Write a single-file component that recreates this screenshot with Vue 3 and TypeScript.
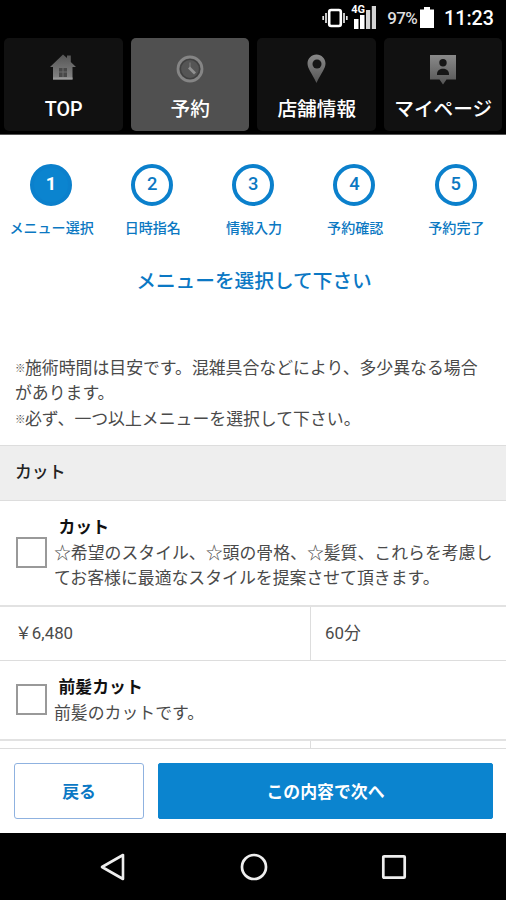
<script setup lang="ts">
interface Tab {
  id: 'home' | 'clock' | 'pin' | 'user'
  label: string
  active: boolean
}
interface MenuItem {
  name: string
  description: string[]
  price: string
  time: string
}

const tabs: Tab[] = [
  { id: 'home', label: 'TOP', active: false },
  { id: 'clock', label: '予約', active: true },
  { id: 'pin', label: '店舗情報', active: false },
  { id: 'user', label: 'マイページ', active: false },
]

const steps: string[] = ['メニュー選択', '日時指名', '情報入力', '予約確認', '予約完了']

const items: MenuItem[] = [
  {
    name: 'カット',
    description: [
      '☆希望のスタイル、☆頭の骨格、☆髪質、これらを考慮し',
      'てお客様に最適なスタイルを提案させて頂きます。',
    ],
    price: '￥6,480',
    time: '60分',
  },
  { name: '前髪カット', description: ['前髪のカットです。'], price: '', time: '' },
]
</script>

<template>
  <div class="screen">
    <header class="status">
      <svg class="vibrate" width="26" height="20" viewBox="0 0 26 20">
        <rect x="7.2" y="2" width="11.6" height="16" rx="2" fill="none" stroke="#fff" stroke-width="2.6" />
        <path d="M4 5v10M1.2 8v4M22 5v10M24.8 8v4" stroke="#e8e8e8" stroke-width="1.7" />
      </svg>
      <div class="signal">
        <span class="net">4G</span>
        <svg width="24" height="24" viewBox="0 0 24 24">
          <path d="M1 14h4.5v10H1z M7 10h4.5v14H7z" fill="#fff" />
          <path d="M13 5h4.2v19H13z M18.8 1H23v23h-4.2z" fill="#d4d4d4" />
        </svg>
      </div>
      <span class="percent">97%</span>
      <svg class="battery" width="14" height="21" viewBox="0 0 14 21">
        <path d="M4 0h6v2.5h4V21H0V2.5h4z" fill="#fff" />
      </svg>
      <span class="clock">11:23</span>
    </header>

    <nav class="tabs">
      <a v-for="tab in tabs" :key="tab.id" class="tab" :class="{ active: tab.active }">
        <svg class="tab-icon" width="30" height="32" viewBox="0 0 30 32">
          <defs>
            <linearGradient id="metal" x1="0" y1="0" x2="0" y2="1">
              <stop offset="0" stop-color="#555" />
              <stop offset="1" stop-color="#858585" />
            </linearGradient>
            <linearGradient id="metal-dark" x1="0" y1="0" x2="0" y2="1">
              <stop offset="0" stop-color="#8a8a8a" />
              <stop offset="1" stop-color="#555" />
            </linearGradient>
          </defs>
          <template v-if="tab.id === 'home'">
            <path d="M15 1.5 19 5V2.5h3.8V9L28 14h-3.5v12.5H5V14H2z" fill="url(#metal)" />
            <path d="M11 15h8v9h-8z" fill="#484848" />
            <path d="M15 15v9M11 19h8" stroke="#6c6c6c" stroke-width="1" />
            <path d="M5 25.5h19.5" stroke="#999" stroke-width="2" />
          </template>
          <template v-else-if="tab.id === 'clock'">
            <circle cx="15" cy="16" r="12" fill="#555" stroke="#858585" stroke-width="2.8" />
            <circle cx="15" cy="16" r="9.6" fill="none" stroke="#404040" stroke-width="1.4" />
            <path d="M15 9.5v6" fill="none" stroke="#727272" stroke-width="1.6" />
            <path d="M14 14.5l6 6" fill="none" stroke="#909090" stroke-width="2.8" />
          </template>
          <template v-else-if="tab.id === 'pin'">
            <path d="M15.5 1.5c5 0 9 4 9 9 0 5-4 9-9 19.5-5-10.5-9-14.500-9-19.5 0-5 4-9 9-9z" fill="url(#metal-dark)" />
            <circle cx="16" cy="11" r="4.5" fill="#151515" />
          </template>
          <template v-else>
            <path d="M2 2h26v24.5h-9.5L15 31.5l-3.5-5H2z" fill="url(#metal-dark)" />
            <circle cx="15" cy="9.8" r="3.7" fill="#161616" />
            <path d="M9 22v-1c0-7 12-7 12 0v1z" fill="#161616" />
          </template>
        </svg>
        <span class="tab-label">{{ tab.label }}</span>
      </a>
    </nav>

    <main class="content">
      <ol class="steps">
        <li v-for="(step, i) in steps" :key="step" class="step">
          <span class="step-number" :class="{ current: i === 0 }">{{ i + 1 }}</span>
          <span class="step-label">{{ step }}</span>
        </li>
      </ol>
      <h1 class="title">メニューを選択して下さい</h1>
      <div class="notes">
        <p><span class="mark">※</span>施術時間は目安です。混雑具合などにより、多少異なる場合<br />があります。</p>
        <p><span class="mark">※</span>必ず、一つ以上メニューを選択して下さい。</p>
      </div>

      <h2 class="category">カット</h2>
      <section v-for="item in items" :key="item.name" class="item">
        <label class="choice">
          <span class="box"></span>
          <span class="choice-text">
            <strong class="name">{{ item.name }}</strong>
            <span v-for="line in item.description" :key="line" class="line">{{ line }}</span>
          </span>
        </label>
        <div class="facts">
          <span class="price">{{ item.price }}</span>
          <span class="time">{{ item.time }}</span>
        </div>
      </section>
    </main>

    <footer class="actions">
      <button class="back">戻る</button>
      <button class="next">この内容で次へ</button>
    </footer>

    <div class="softkeys">
      <svg width="28" height="28" viewBox="0 0 28 28">
        <path d="M24 2v24L3 14z" fill="none" stroke="#eee" stroke-width="2.6" stroke-linejoin="round" />
      </svg>
      <svg width="28" height="28" viewBox="0 0 28 28">
        <circle cx="14" cy="14" r="12" fill="none" stroke="#eee" stroke-width="2.7" />
      </svg>
      <svg width="28" height="28" viewBox="0 0 28 28">
        <rect x="3.3" y="3.3" width="21.4" height="21.4" rx="0.8" fill="none" stroke="#eee" stroke-width="2.7" />
      </svg>
    </div>
  </div>
</template>

<style>
body {
  margin: 0;
}
</style>

<style scoped>
.screen {
  display: flex;
  flex-direction: column;
  width: 506px;
  height: 900px;
  overflow: hidden;
  background: #fff;
  color: #4a4a4a;
  font-family: Roboto, 'Noto Sans CJK JP', sans-serif;
  font-size: 16.87px;
  line-height: 25.5px;
}
.status {
  display: flex;
  align-items: center;
  justify-content: flex-end;
  box-sizing: border-box;
  flex: none;
  height: 36px;
  padding-right: 12px;
  background: #000;
  color: #fff;
}
.vibrate {
  margin: 0 5px 0 0;
}
.signal {
  position: relative;
  display: flex;
  margin: -3px 10px 0 0;
}
.net {
  position: absolute;
  top: 0;
  left: -2px;
  font-size: 11px;
  font-weight: 700;
  line-height: 9px;
  text-shadow: 0 0 1px #000, 1px 1px 0 #000;
}
.percent {
  margin: 1px 3px 0 0;
  color: #ddd;
  font-size: 17px;
  font-weight: 500;
  letter-spacing: -0.7px;
}
.battery {
  margin: -2px 10px 0 0;
}
.clock {
  margin-top: 2px;
  font-size: 19.7px;
  font-weight: 500;
}
.tabs {
  display: grid;
  grid-template-columns: repeat(4, 1fr);
  gap: 8px;
  box-sizing: border-box;
  flex: none;
  height: 99px;
  padding: 2px 4px 3px;
  border-bottom: 1px solid #555;
  background: #000;
}
.tab {
  display: flex;
  flex-direction: column;
  align-items: center;
  border-radius: 5px;
  background: #111;
  color: #fff;
}
.tab.active {
  background: #505050;
}
.tab-icon {
  margin-top: 15px;
}
.tab-label {
  margin-top: 12.5px;
  padding-left: 1px;
  font-size: 19.68px;
  font-weight: 500;
  line-height: 24px;
  white-space: nowrap;
}
.content {
  flex: 1;
  min-height: 0;
  overflow: hidden;
}
.steps {
  display: grid;
  grid-template-columns: repeat(5, 1fr);
  margin: 0;
  padding: 29px 0 0;
  list-style: none;
}
.step {
  display: flex;
  flex-direction: column;
  align-items: center;
  color: #0b78c2;
}
.step-number {
  box-sizing: border-box;
  width: 42px;
  height: 42px;
  margin-left: 0.6px;
  border: 4px solid #0b80cc;
  border-radius: 50%;
  font-size: 18.3px;
  font-weight: 500;
  line-height: 32px;
  text-align: center;
}
.step-number.current {
  background: #0b84cf;
  color: #fff;
  font-weight: 700;
}
.step-label {
  margin-top: 11px;
  padding-left: 2px;
  font-size: 14.06px;
  font-weight: 500;
  line-height: 22px;
  white-space: nowrap;
}
.title {
  margin: 28px 0 0;
  padding-left: 2px;
  color: #0b78c4;
  font-size: 19.68px;
  font-weight: 500;
  line-height: 30px;
  text-align: center;
}
.notes {
  padding: 58.5px 14px 12.5px 15px;
}
.notes p {
  margin: 0;
  white-space: nowrap;
}
.mark {
  display: inline-block;
  width: 10px;
  font-size: 10.5px;
  font-weight: 700;
  vertical-align: 2px;
  line-height: 1;
}
.category {
  box-sizing: border-box;
  height: 56px;
  margin: 0;
  padding: 14px 15px 0;
  border-top: 1px solid #ddd;
  border-bottom: 1px solid #ddd;
  background: #eee;
  color: #222;
  font-size: 16.87px;
  font-weight: 500;
}
.choice {
  display: flex;
  align-items: center;
  padding: 14px 0 13px 16px;
}
.box {
  box-sizing: border-box;
  flex: none;
  width: 31px;
  height: 31px;
  margin: -2px 7px 0 0;
  border: 2px solid #999;
}
.choice-text {
  padding-top: 0.5px;
}
.name {
  display: block;
  padding-left: 4.5px;
  color: #111;
  font-weight: 700;
}
.line {
  display: block;
  white-space: nowrap;
}
.facts {
  display: grid;
  grid-template-columns: 310px 1fr;
  box-sizing: border-box;
  height: 56px;
  border-top: 2px solid #e2e2e2;
  border-bottom: 1px solid #ddd;
}
.facts span {
  padding: 14px 14px 0;
}
.facts .price {
  padding-left: 15px;
}
.facts .time {
  border-left: 1px solid #ddd;
}
.actions {
  display: grid;
  grid-template-columns: 130px 1fr;
  gap: 14px;
  box-sizing: border-box;
  flex: none;
  height: 85px;
  padding: 14px 13px 14px 14px;
  border-top: 1px solid #ddd;
}
.actions button {
  padding: 3px 0 0;
  border: 1px solid #8fb2e0;
  border-radius: 3px;
  background: #fff;
  color: #0b78c4;
  font: inherit;
  font-weight: 700;
}
.actions .next {
  border-color: #0b84cf;
  border-radius: 2px;
  background: #0b84cf;
  color: #fff;
}
.softkeys {
  display: flex;
  justify-content: center;
  gap: 112.5px;
  box-sizing: border-box;
  flex: none;
  height: 67px;
  padding: 20px 0 0 1px;
  background: #000;
}
</style>
